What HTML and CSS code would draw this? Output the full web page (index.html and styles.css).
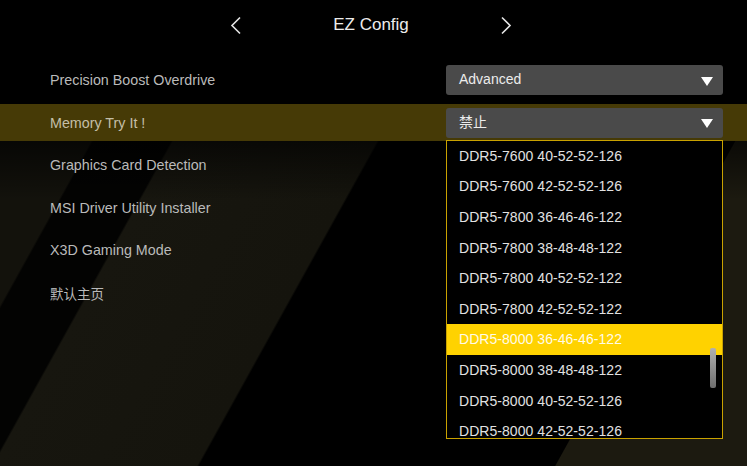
FILE: index.html
```html
<!DOCTYPE html>
<html lang="zh">
<head>
<meta charset="utf-8">
<title>EZ Config</title>
<link rel="stylesheet" href="styles.css">
</head>
<body>
<div class="screen">
  <header class="topbar">
    <svg class="chev" width="12" height="19" viewBox="0 0 12 19"><path d="M10 1.5 L2 9.5 L10 17.5" fill="none" stroke="#e6e6e6" stroke-width="1.6"/></svg>
    <h1 class="title">EZ Config</h1>
    <svg class="chev" width="12" height="19" viewBox="0 0 12 19"><path d="M2 1.5 L10 9.5 L2 17.5" fill="none" stroke="#e6e6e6" stroke-width="1.6"/></svg>
  </header>
  <main class="settings">
    <div class="row">
      <span class="label">Precision Boost Overdrive</span>
      <div class="select"><span>Advanced</span><i class="arrow"></i></div>
    </div>
    <div class="row active">
      <span class="label">Memory Try It !</span>
      <div class="select-wrap">
        <div class="select"><span>禁止</span><i class="arrow"></i></div>
        <div class="menu">
          <div class="item">DDR5-7600 40-52-52-126</div>
          <div class="item">DDR5-7600 42-52-52-126</div>
          <div class="item">DDR5-7800 36-46-46-122</div>
          <div class="item">DDR5-7800 38-48-48-122</div>
          <div class="item">DDR5-7800 40-52-52-122</div>
          <div class="item">DDR5-7800 42-52-52-122</div>
          <div class="item selected">DDR5-8000 36-46-46-122</div>
          <div class="item">DDR5-8000 38-48-48-122</div>
          <div class="item">DDR5-8000 40-52-52-126</div>
          <div class="item">DDR5-8000 42-52-52-126</div>
          <div class="scrollbar"></div>
        </div>
      </div>
    </div>
    <div class="row"><span class="label">Graphics Card Detection</span></div>
    <div class="row"><span class="label">MSI Driver Utility Installer</span></div>
    <div class="row"><span class="label">X3D Gaming Mode</span></div>
    <div class="row"><span class="label cjk">默认主页</span></div>
  </main>
</div>
</body>
</html>
```
FILE: styles.css
```css
* { box-sizing: border-box; }
html, body { margin: 0; padding: 0; }
body {
  width: 747px;
  height: 466px;
  overflow: hidden;
  font-family: "Liberation Sans", "Noto Sans CJK SC", sans-serif;
  background: #000;
}
.screen {
  width: 747px;
  height: 466px;
  position: relative;
  background:
    linear-gradient(180deg, #000 0px, #000 105px, rgba(0,0,0,0) 200px),
    linear-gradient(119deg,
      #13120c 0px, #13120c 148px,
      #030302 150px, #030302 218px,
      #17160f 220px, #15140d 398px,
      #000 400px, #000 711px,
      #1c1a10 712px, #1c1a10 880px);
}
.topbar {
  height: 50px;
  display: flex;
  align-items: center;
  justify-content: center;
  padding-right: 5px;
}
.chev { display: block; margin-top: 1px; }
.title {
  margin: 0;
  width: 258px;
  text-align: center;
  font-weight: normal;
  font-size: 17px;
  color: #ececec;
}
.settings {
  padding-top: 11.5px;
  display: flex;
  flex-direction: column;
  gap: 5.6px;
}
.row {
  height: 37px;
  display: flex;
  align-items: center;
  justify-content: space-between;
  padding-left: 50px;
  padding-right: 24px;
}
.row.active { background: #463a06; }
.label {
  font-size: 14.3px;
  color: #bababa;
}
.row.active .label { color: #c4bfa8; }
.cjk { font-family: "Noto Sans CJK SC", sans-serif; font-size: 13.5px; }
.select-wrap { position: relative; }
.select {
  width: 277px;
  height: 30px;
  border-radius: 3px;
  background: #4a4a4a;
  display: flex;
  align-items: center;
  justify-content: space-between;
  padding: 0 10px 0 13px;
  color: #ececec;
  font-size: 14px;
}
.select span { margin-top: -3px; }
.arrow {
  width: 0;
  height: 0;
  border-left: 6px solid transparent;
  border-right: 6px solid transparent;
  border-top: 9px solid #fff;
  margin-top: 2px;
}
.menu {
  position: absolute;
  top: 32px;
  left: 0;
  width: 277px;
  height: 299px;
  border: 1px solid #c9a200;
  background: #000;
  overflow: hidden;
}
.item {
  height: 30.6px;
  display: flex;
  align-items: center;
  padding-left: 12px;
  font-size: 14px;
  color: #e2e2e2;
  letter-spacing: 0.05px;
}
.item.selected { background: #ffd200; color: #fffbe8; }
.scrollbar {
  position: absolute;
  right: 6px;
  top: 207px;
  width: 6px;
  height: 40px;
  border-radius: 2px;
  background: linear-gradient(180deg, #b0b0b0, #6e6e6e);
}
```
